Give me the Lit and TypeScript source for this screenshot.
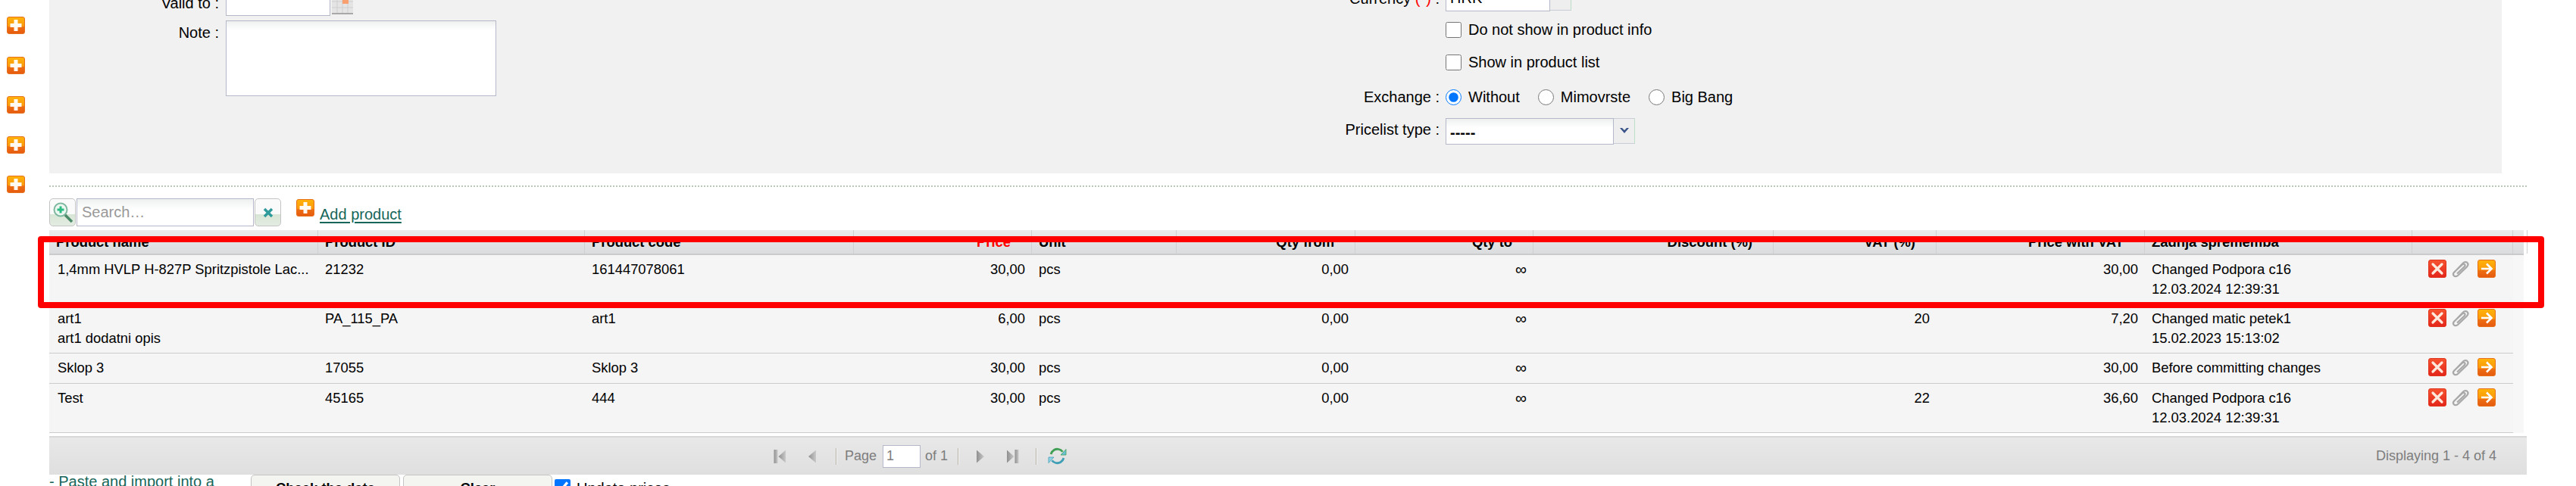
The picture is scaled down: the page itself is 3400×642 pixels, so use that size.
import { LitElement, html, css, svg } from "lit";
import { customElement } from "lit/decorators.js";

interface Row {
  name: string;
  sub?: string;
  id: string;
  code: string;
  price: string;
  vat: string;
  total: string;
  change: string;
  date?: string;
}

const ROWS: Row[] = [
  { name: "1,4mm HVLP H-827P Spritzpistole Lac...", id: "21232", code: "161447078061", price: "30,00", vat: "", total: "30,00", change: "Changed Podpora c16", date: "12.03.2024 12:39:31" },
  { name: "art1", sub: "art1 dodatni opis", id: "PA_115_PA", code: "art1", price: "6,00", vat: "20", total: "7,20", change: "Changed matic petek1", date: "15.02.2023 15:13:02" },
  { name: "Sklop 3", id: "17055", code: "Sklop 3", price: "30,00", vat: "", total: "30,00", change: "Before committing changes" },
  { name: "Test", id: "45165", code: "444", price: "30,00", vat: "22", total: "36,60", change: "Changed Podpora c16", date: "12.03.2024 12:39:31" },
];

const plusIcon = () => svg`<svg class="plus" viewBox="0 0 24 23" width="24" height="23">
  <rect x="0.5" y="0.5" width="23" height="22" rx="2.5" fill="url(#gOrange)" stroke="#e8701a"/>
  <path d="M9.5 4h5v5h5v5h-5v5h-5v-5h-5V9h5z" fill="#fff" opacity=".95"/>
</svg>`;

const delIcon = () => svg`<svg viewBox="0 0 24 24" width="24" height="24">
  <rect x="0.5" y="0.5" width="23" height="23" rx="2.5" fill="url(#gRed)" stroke="#e0341c"/>
  <path d="M6 6l12 12M18 6L6 18" stroke="#ffe9dc" stroke-width="3.2" stroke-linecap="round"/>
</svg>`;

const clipIcon = () => svg`<svg viewBox="0 0 26 24" width="26" height="24" fill="none">
  <path d="M4 18L17 4.5c2-2 5-1.5 6 .2 1 1.6.4 3.4-1 4.8L10 21c-1.600 1.500-4 1.500-5.200.2-1.200-1.300-1-3.200.400-4.700L16 6.500c.9-.9 2.200-1 3-.2.800.8.600 2-.3 2.900L9 18.500" stroke="#a8a8a8" stroke-width="2.200"/>
</svg>`;

const arrowIcon = () => svg`<svg viewBox="0 0 24 24" width="24" height="24">
  <rect x="0.5" y="0.5" width="23" height="23" rx="2.5" fill="url(#gOrange)" stroke="#e8701a"/>
  <path d="M5 12h13M12 5.500l6.500 6.500-6.500 6.500" fill="none" stroke="#fff" stroke-width="2.600"/>
</svg>`;

const firstIcon = () => svg`<svg viewBox="0 0 17 20" width="17" height="20"><rect x="0.5" y="1" width="5" height="18" fill="url(#gPager)"/><path d="M16 1.500v17L6.500 10z" fill="url(#gPager)"/></svg>`;
const prevIcon = () => svg`<svg viewBox="0 0 12 20" width="12" height="20"><path d="M11 1.500v17L1 10z" fill="url(#gPager)"/></svg>`;
const nextIcon = () => svg`<svg viewBox="0 0 12 20" width="12" height="20"><path d="M1 1.500v17L11 10z" fill="url(#gPager)"/></svg>`;
const lastIcon = () => svg`<svg viewBox="0 0 17 20" width="17" height="20"><path d="M1 1.500v17L10.500 10z" fill="url(#gPager)"/><rect x="11.500" y="1" width="5" height="18" fill="url(#gPager)"/></svg>`;
const refreshIcon = () => svg`<svg viewBox="0 0 25 25" width="25" height="25" fill="none">
  <path d="M4 10c1.500-5 6-7.500 10.500-6.500 2.500.5 4 1.800 5 3.200" stroke="#3f9f55" stroke-width="2.800"/>
  <path d="M17 11h7V3.500z" fill="#6cc0d8" stroke="#3f9f55" stroke-width=".8"/>
  <path d="M21 15c-1.500 5-6 7.500-10.500 6.500-2.500-.5-4-1.800-5-3.200" stroke="#3f9fb5" stroke-width="2.800"/>
  <path d="M8 14H1v7.500z" fill="#8fd3e6" stroke="#3f9fb5" stroke-width=".8"/>
</svg>`;

@customElement("app-root")
export class AppRoot extends LitElement {
  static styles = css`
    :host {
      display: block;
      width: 3400px;
      height: 642px;
      overflow: hidden;
      position: relative;
      background: #fff;
      color: #000;
      font-family: "Liberation Sans", Arial, sans-serif;
      font-size: 20px;
    }
    * { box-sizing: border-box; }
    .defs { display: block; width: 0; height: 0; }
    .page { display: grid; grid-template-columns: 65px 3270px; }
    .rail {
      display: flex;
      flex-direction: column;
      gap: 29.5px;
      padding: 22px 0 0 9px;
    }
    .plus { display: block; flex: none; }

    .panel {
      width: 3237px;
      height: 229px;
      background: #f1f1f1;
      overflow: hidden;
      display: flex;
      align-items: flex-start;
    }
    .col-left { width: 1610px; margin-top: -14px; display: flex; flex-direction: column; gap: 6px; }
    .col-right { margin-top: -20px; display: flex; flex-direction: column; }
    .frow { display: grid; grid-template-columns: 224px auto; column-gap: 9px; align-items: center; justify-content: start; }
    .col-right .frow { grid-template-columns: 225px auto; column-gap: 8px; }
    .lbl { text-align: right; line-height: 24px; white-space: nowrap; }
    .req { color: #f00; }
    .top { align-items: start; }
    .top .lbl { padding-top: 4px; }
    .sel-row .lbl { padding-top: 3px; }
    .field {
      display: block;
      border: 1px solid #b5b8c8;
      background: linear-gradient(#eef0f0, #fff 12px);
      font: 20px "Liberation Sans", Arial, sans-serif;
      color: #000;
      padding: 0 5px;
      margin: 0;
      border-radius: 0;
      outline: none;
    }
    .with-trigger { display: flex; align-items: flex-start; }
    .valid { width: 138px; height: 35px; }
    .cal { display: block; margin-left: 2px; }
    .note { width: 357px; height: 100px; resize: none; }
    .cur { width: 138px; height: 35px; }
    .trig {
      height: 34px;
      width: 28px;
      background: #eeeeee;
      border: 1px solid #c9cdd8;
      border-left: 0;
      border-right-color: #bfe0c8;
      display: flex;
      align-items: center;
      justify-content: center;
    }
    .sel { width: 222px; height: 35px; font-weight: 700; padding-top: 4px; }
    .check-line { display: flex; align-items: center; gap: 9px; height: 21px; white-space: nowrap; }
    .check-line input, .radios input, .bottom input { width: 21px; height: 21px; margin: 0; flex: none; }
    .mt14 { margin-top: 14px; }
    .mt22 { margin-top: 22px; }
    .mt-radio { margin-top: 23px; }
    .mt-sel { margin-top: 16px; }
    .radios { display: flex; align-items: center; white-space: nowrap; height: 21px; }
    .radios label { display: flex; align-items: center; gap: 9px; }
    .radios label + label { margin-left: 24px; }

    .rule { margin-top: 16px; height: 2px; border-top: 2px dotted #b9c8b9; }

    .toolbar { margin-top: 15px; height: 37px; display: flex; align-items: flex-start; }
    .tbtn {
      width: 35px;
      height: 37px;
      border: 1px solid #c4c4c4;
      border-radius: 5px;
      background: linear-gradient(#fafafa 0, #fafafa 58%, #d8e6d6 58%, #e4ece2 100%);
      display: flex;
      align-items: center;
      justify-content: center;
      flex: none;
    }
    .search {
      width: 234px;
      height: 37px;
      margin: 0 1px;
      padding: 0 6px;
      background: linear-gradient(#eef0f0, #fff 14px);
    }
    .search::placeholder { color: #999; opacity: 1; }
    .add { margin-left: 20px; margin-top: 1px; display: flex; gap: 7px; }
    .add .plus { flex: none; }
    .link {
      color: #17665a;
      text-decoration: underline;
      text-underline-offset: 3px;
      line-height: 24px;
      padding-top: 8px;
      white-space: nowrap;
    }

    .grid { margin-top: 5px; width: 3266px; }
    .cols {
      display: grid;
      grid-template-columns: 355px 352px 355px 235px 191px 236px 235px 317px 215px 275px 353px 133px 14px;
    }
    .head {
      height: 33px;
      background: linear-gradient(#ebebeb, #dbdcde);
      border-bottom: 2px solid #c9cbcd;
      font-weight: 700;
      font-size: 18.4px;
    }
    .head > div {
      border-right: 1px solid #d0d0d0;
      line-height: 31px;
      padding: 0 9px;
      white-space: nowrap;
      overflow: hidden;
    }
    .head .r { text-align: right; padding-right: 27px; }
    .head .price { color: #f00; }
    .body { background: #f7f7f7; }
    .row {
      width: 3252px;
      background: #f5f5f5;
      border-bottom: 1px solid #cccccc;
      font-size: 18.4px;
      line-height: 26px;
      grid-template-columns: 355px 352px 355px 235px 191px 236px 235px 317px 215px 275px 353px 133px;
    }
    .row > div { padding: 6px 9px 6px; white-space: nowrap; overflow: hidden; }
    .row .c1 { padding-left: 11px; }
    .row .r { text-align: right; }
    .row .inf { font-size: 21px; }
    .row .acts { padding: 6px 0 0 21px; display: flex; align-items: flex-start; gap: 5px; }
    .acts svg { display: block; flex: none; }
    .acts svg:last-child { margin-left: 5px; }

    .footer {
      margin-top: 4px;
      border-top: 2px solid #d8d8d8;
      height: 51px;
      background: linear-gradient(#e8e8e8, #dfdfdf);
      display: flex;
      align-items: center;
      color: #7d7d7d;
      font-size: 18px;
      padding: 0 40px 0 956px;
    }
    .footer svg { display: block; flex: none; }
    .sep { width: 2px; height: 22px; background: linear-gradient(90deg, #b9b4a8 50%, #f4f4f4 50%); flex: none; }
    .pg { width: 50px; height: 30px; border: 1px solid #b5b8c8; background: #fff; font: 18px "Liberation Sans", Arial, sans-serif; color: #7d7d7d; padding: 0 4px; margin: 0 6px 0 8px; outline: none; flex: none; }
    .s10 { width: 10px; flex: none; }
    .s13 { width: 13px; flex: none; }
    .s14 { width: 14px; flex: none; }
    .s22 { width: 22px; flex: none; }
    .s25 { width: 25px; flex: none; }
    .s28 { width: 28px; flex: none; }
    .disp { margin-left: auto; }

    .bottom { display: flex; align-items: flex-start; height: 20px; }
    .paste { width: 266px; color: #17665a; line-height: 18px; white-space: nowrap; }
    .btn {
      width: 197px;
      height: 40px;
      border: 1px solid #c4c4c4;
      border-radius: 5px;
      background: #f4f4f0;
      font: 700 18.4px "Liberation Sans", Arial, sans-serif;
      text-align: center;
      line-height: 34px;
      flex: none;
    }
    .btn + .btn { margin-left: 4px; }
    .bottom input { margin: 6px 8px 0 3px; }
    .upd { line-height: 22px; padding-top: 7px; white-space: nowrap; }

    .callout {
      position: absolute;
      left: 50px;
      top: 312px;
      width: 3308px;
      height: 95px;
      border: 8px solid #f00;
      border-radius: 4px;
      pointer-events: none;
    }
  `;

  private renderRow(r: Row) {
    return html`<div class="cols row">
      <div class="c1">${r.name}${r.sub ? html`<br />${r.sub}` : ""}</div>
      <div>${r.id}</div>
      <div>${r.code}</div>
      <div class="r">${r.price}</div>
      <div>pcs</div>
      <div class="r">0,00</div>
      <div class="r"><span class="inf">∞</span></div>
      <div></div>
      <div class="r">${r.vat}</div>
      <div class="r">${r.total}</div>
      <div>${r.change}${r.date ? html`<br />${r.date}` : ""}</div>
      <div class="acts">${delIcon()}${clipIcon()}${arrowIcon()}</div>
    </div>`;
  }

  render() {
    return html`
      <svg class="defs" aria-hidden="true">
        <defs>
          <linearGradient id="gOrange" x1="0" y1="0" x2="0" y2="1">
            <stop offset="0" stop-color="#ffb30a" />
            <stop offset=".55" stop-color="#fb9a0c" />
            <stop offset=".6" stop-color="#ee6f12" />
            <stop offset="1" stop-color="#e55a10" />
          </linearGradient>
          <linearGradient id="gRed" x1="0" y1="0" x2="0" y2="1">
            <stop offset="0" stop-color="#f6532f" />
            <stop offset="1" stop-color="#e3261a" />
          </linearGradient>
          <linearGradient id="gPager" x1="0" y1="0" x2="1" y2="0">
            <stop offset="0" stop-color="#8f8f8f" />
            <stop offset="1" stop-color="#c9c9c9" />
          </linearGradient>
        </defs>
      </svg>
      <div class="page">
        <div class="rail">${[0, 1, 2, 3, 4].map(() => plusIcon())}</div>
        <div class="main">
          <div class="panel">
            <div class="col-left">
              <div class="frow">
                <div class="lbl">Valid to :</div>
                <div class="with-trigger">
                  <input class="field valid" />
                  <svg class="cal" width="28" height="33" viewBox="0 0 28 33">
                    <rect width="28" height="33" fill="#e4e4e4" />
                    <path d="M0 8h28M0 16h28M0 24h28M7 0v32M14 0v32M21 0v32" stroke="#cfcfcf" />
                    <rect x="14" y="12" width="8" height="7" fill="#f8a070" />
                    <rect y="31" width="28" height="2" fill="#a8a8a8" />
                  </svg>
                </div>
              </div>
              <div class="frow top">
                <div class="lbl">Note :</div>
                <textarea class="field note"></textarea>
              </div>
            </div>
            <div class="col-right">
              <div class="frow">
                <div class="lbl">Currency <span class="req">(*)</span> :</div>
                <div class="with-trigger">
                  <input class="field cur" value="HRK" />
                  <div class="trig"></div>
                </div>
              </div>
              <div class="frow mt14">
                <div></div>
                <label class="check-line"><input type="checkbox" />Do not show in product info</label>
              </div>
              <div class="frow mt22">
                <div></div>
                <label class="check-line"><input type="checkbox" />Show in product list</label>
              </div>
              <div class="frow mt-radio">
                <div class="lbl">Exchange :</div>
                <div class="radios">
                  <label><input type="radio" name="ex" checked />Without</label>
                  <label><input type="radio" name="ex" />Mimovrste</label>
                  <label><input type="radio" name="ex" />Big Bang</label>
                </div>
              </div>
              <div class="frow mt-sel top sel-row">
                <div class="lbl">Pricelist type :</div>
                <div class="with-trigger">
                  <input class="field sel" value="-----" />
                  <div class="trig">
                    <svg width="14" height="10" viewBox="0 0 14 10"><path d="M1 1l6 7 6-7-3 0-3 3-3-3z" fill="#3b5488" /></svg>
                  </div>
                </div>
              </div>
            </div>
          </div>

          <div class="rule"></div>

          <div class="toolbar">
            <div class="tbtn">
              <svg width="30" height="30" viewBox="0 0 30 30" fill="none">
                <circle cx="12" cy="11" r="8.500" fill="#eef8f2" stroke="#7fb8a0" stroke-width="2" />
                <path d="M12 6.500v9M7.500 11h9" stroke="#2dbb84" stroke-width="3" />
                <path d="M18 18l9 9" stroke="#4a8a68" stroke-width="3.500" />
              </svg>
            </div>
            <input class="field search" placeholder="Search…" />
            <div class="tbtn">
              <svg width="16" height="16" viewBox="0 0 16 16"><path d="M3 3l10 10M13 3L3 13" stroke="#2f9a9a" stroke-width="3.500" /></svg>
            </div>
            <div class="add">${plusIcon()}<span class="link">Add product</span></div>
          </div>

          <div class="grid">
            <div class="cols head">
              <div>Product name</div>
              <div>Product ID</div>
              <div>Product code</div>
              <div class="r price">Price</div>
              <div>Unit</div>
              <div class="r">Qty from</div>
              <div class="r">Qty to</div>
              <div class="r">Discount (%)</div>
              <div class="r">VAT (%)</div>
              <div class="r">Price with VAT</div>
              <div>Zadnja sprememba</div>
              <div></div>
              <div></div>
            </div>
            <div class="body">${ROWS.map((r) => this.renderRow(r))}</div>
          </div>

          <div class="footer">
            ${firstIcon()}
            <span class="s28"></span>
            ${prevIcon()}
            <span class="s25"></span>
            <div class="sep"></div>
            <span class="s10"></span>
            <span>Page</span>
            <input class="pg" value="1" />
            <span>of 1</span>
            <span class="s13"></span>
            <div class="sep"></div>
            <span class="s22"></span>
            ${nextIcon()}
            <span class="s28"></span>
            ${lastIcon()}
            <span class="s22"></span>
            <div class="sep"></div>
            <span class="s14"></span>
            ${refreshIcon()}
            <span class="disp">Displaying 1 - 4 of 4</span>
          </div>

          <div class="bottom">
            <div class="paste">- Paste and import into a</div>
            <div class="btn">Check the data</div>
            <div class="btn">Clear</div>
            <input type="checkbox" checked />
            <span class="upd">Update prices</span>
          </div>
        </div>
      </div>
      <div class="callout"></div>
    `;
  }
}
